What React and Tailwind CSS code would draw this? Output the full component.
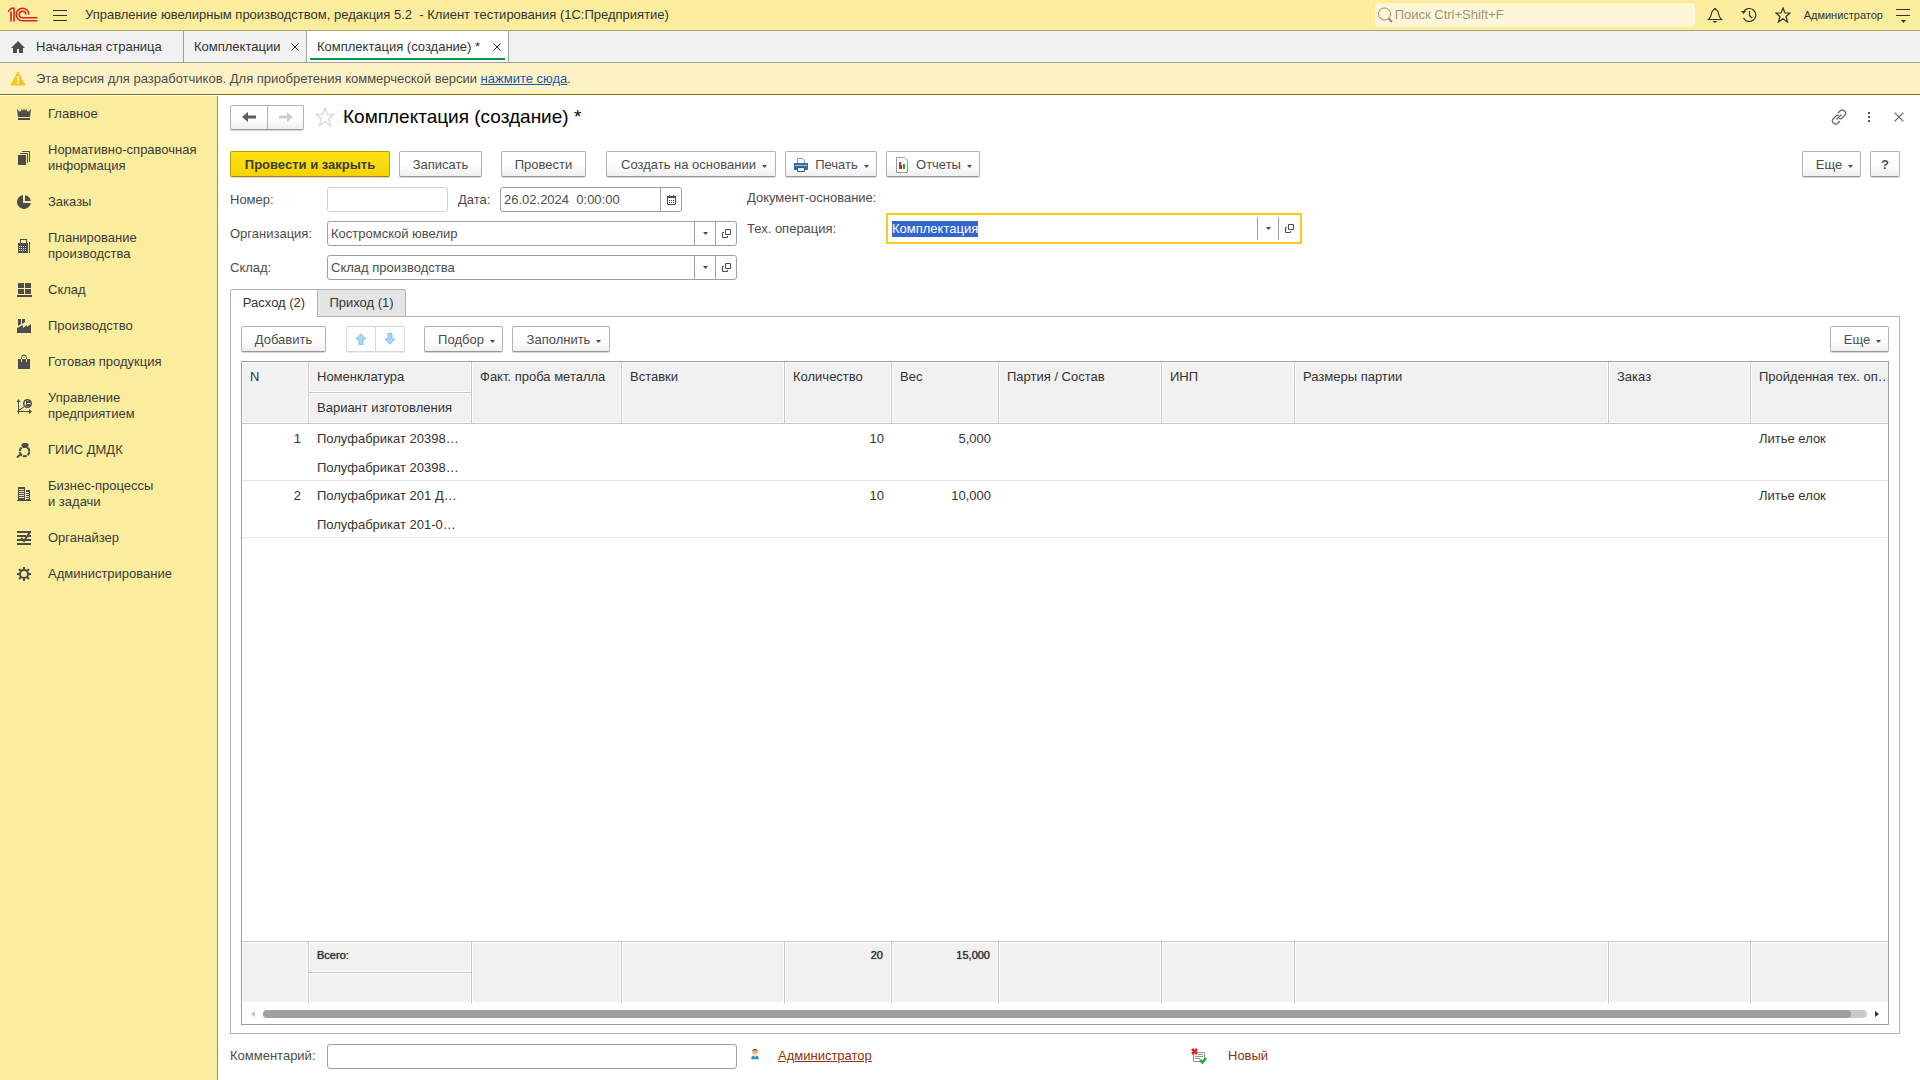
import { useEffect, useRef } from 'react';
import clsx from 'clsx';

const sections = [
  { icon: 'crown', label: 'Главное' },
  { icon: 'docs', label: 'Нормативно-справочная\nинформация' },
  { icon: 'pie', label: 'Заказы' },
  { icon: 'register', label: 'Планирование\nпроизводства' },
  { icon: 'boxes', label: 'Склад' },
  { icon: 'factory', label: 'Производство' },
  { icon: 'bag', label: 'Готовая продукция' },
  { icon: 'chart', label: 'Управление\nпредприятием' },
  { icon: 'ring', label: 'ГИИС ДМДК' },
  { icon: 'building', label: 'Бизнес-процессы\nи задачи' },
  { icon: 'organizer', label: 'Органайзер' },
  { icon: 'gear', label: 'Администрирование' },
];

const rows = [
  { n: 1, item: 'Полуфабрикат 20398…', variant: 'Полуфабрикат 20398…', qty: '10', weight: '5,000', operation: 'Литье елок' },
  { n: 2, item: 'Полуфабрикат 201 Д…', variant: 'Полуфабрикат 201-0…', qty: '10', weight: '10,000', operation: 'Литье елок' },
];

const sectionShapes = {
  crown: (
    <>
      <path d="M1 3l3 3 2-3 1 2 1-3 1 3 1-2 2 3 3-3-1 8H2z" />
      <path d="M2 12h12v2H2z" />
    </>
  ),
  docs: (
    <>
      <path d="M2 5h8v10H2z" />
      <path d="M4 3.500h7.500V13M6 1.500h7.500V12" fill="none" stroke="currentColor" />
    </>
  ),
  pie: (
    <>
      <path d="M7 1v8h7.900A7 7 0 1 1 7 1z" />
      <path d="M9 1.200A7 7 0 0 1 14.800 7H9z" />
    </>
  ),
  register: (
    <>
      <path d="M4 1h7v4h1v10H2V5h2zM5 2v3h5V2z" fillRule="evenodd" />
      <path d="M13 4h1v11h-1z" />
      <path d="M3 8.500h8M3 10.500h8M3 12.500h8" stroke="#fbed9e" strokeDasharray="1 1" />
    </>
  ),
  boxes: <path d="M2 1h6v5H2zM9 1h6v5H9zM2 7h6v5H2zM9 7h6v5H9zM1 13h15v2H1z" />,
  factory: (
    <>
      <path d="M1 10l6-3v3l4-3v2l4-3v9H1z" />
      <path d="M2 1h3v5L2 8zM6 1h3v3L6 6z" />
    </>
  ),
  bag: (
    <>
      <path d="M2 5h12v10H2z" />
      <path d="M5.500 8V5M10.500 8V5" fill="none" stroke="#fbed9e" />
      <path d="M5.500 5V3.500a2.500 2.500 0 0 1 5 0V5" fill="none" stroke="currentColor" />
    </>
  ),
  chart: (
    <>
      <path d="M2.500 1L.5 4h4zM16 13.500l-3-2.500v5z" />
      <path d="M2.500 3v13M1 13.500h13M3 12l5-3 1-2" fill="none" stroke="currentColor" />
      <circle cx="11.500" cy="5.500" r="3.800" fill="none" stroke="currentColor" strokeWidth="1.500" />
      <path d="M10 3h1v5h-1zM11 3h3v2h-3zM11 6h3v2h-3z" />
    </>
  ),
  ring: (
    <>
      <circle cx="8.500" cy="9.500" r="4.800" fill="none" stroke="currentColor" strokeWidth="2" strokeDasharray="4 1" />
      <path d="M7 1h4l2 2-2 3H7L5 3z" />
      <path d="M5 12l-4 3.500" stroke="currentColor" strokeWidth="2" />
    </>
  ),
  building: (
    <>
      <path d="M2 1h7v14H2zM10 4h4v11h-4zM1 14h14v1H1z" />
      <path d="M3 3.500h5M3 5.500h5M3 7.500h5M3 9.500h5M3 11.500h5M10 6.500h3M10 8.500h3M10 10.500h3M10 12.500h3" stroke="#fbed9e" />
    </>
  ),
  organizer: (
    <>
      <path d="M1 1h14v2H1zM1 5h9v2H1zM12 5h3v2h-3zM1 9h14v2H1zM1 13h14v2H1z" />
      <path d="M14 2L8 11 5 8" fill="none" stroke="currentColor" strokeWidth="2" />
    </>
  ),
  gear: (
    <>
      <circle cx="8" cy="8" r="4" fill="none" stroke="currentColor" strokeWidth="2" />
      <path
        d="M8 1v3M8 12v3M1 8h3M12 8h3M3 3l2 2M11 11l2 2M13 3l-2 2M5 11l-2 2"
        stroke="currentColor"
        strokeWidth="2"
      />
    </>
  ),
};

function SectionIcon({ name }) {
  return (
    <svg viewBox="0 0 16 16" className="size-4 shrink-0" fill="currentColor" aria-hidden="true">
      {sectionShapes[name]}
    </svg>
  );
}

function Caret({ className }) {
  return (
    <svg viewBox="0 0 5 3" className={clsx('h-[3px] w-[5px] shrink-0', className)} aria-hidden="true">
      <path d="M0 0h5L2.500 3z" fill="currentColor" />
    </svg>
  );
}

function Star({ className }) {
  return (
    <svg viewBox="0 0 16 16" className={className} fill="none" stroke="currentColor" strokeWidth="1.200" aria-hidden="true">
      <path d="M8 1l2 5h5l-4 3.500 1.500 5.500L8 11.800 3.500 15 5 9.500 1 6h5z" />
    </svg>
  );
}

function CrossMark({ className }) {
  return (
    <svg viewBox="0 0 8 8" className={className} fill="none" stroke="currentColor" aria-hidden="true">
      <path d="M.5.5l7 7M7.500.5l-7 7" />
    </svg>
  );
}

function LongArrow({ className }) {
  return (
    <svg viewBox="0 0 14 10" className={clsx('h-[10px] w-[14px]', className)} fill="currentColor" aria-hidden="true">
      <path d="M0 5l6-5v3.500h8v3H6V10z" />
    </svg>
  );
}

function Logo() {
  return (
    <svg viewBox="0 0 30 16" className="h-4 w-[30px]" fill="none" stroke="#dd201f" strokeWidth="1.600" aria-label="1С">
      <path d="M0 4.500L3.500 1.200H6V14.500M3 4.500V14.500" />
      <path d="M20.800 7.500A6.300 6.300 0 1 0 14.500 13.800H29.500" />
      <path d="M17.800 7.500A3.300 3.300 0 1 0 14.500 10.800H29.500" />
    </svg>
  );
}

function HeaderBar() {
  return (
    <header className="flex h-[31px] shrink-0 items-center border-b border-[#aca66c] bg-[#fbed9e] pl-2 pr-[10px]">
      <Logo />
      <button aria-label="Меню" className="ml-[15px] flex w-[14px] flex-col gap-1">
        <span className="h-px w-full bg-[#333]" />
        <span className="h-px w-full bg-[#333]" />
        <span className="h-px w-full bg-[#333]" />
      </button>
      <span className="ml-[18px] whitespace-pre">
        Управление ювелирным производством, редакция 5.2  - Клиент тестирования (1С:Предприятие)
      </span>
      <label className="ml-auto flex h-6 w-80 items-center rounded-sm bg-[#fdf6d7] pl-[2px] text-[#8e8a72]">
        <svg viewBox="0 0 16 16" className="size-4" fill="none" stroke="currentColor" aria-hidden="true">
          <circle cx="7.500" cy="7" r="6" />
          <path d="M11.500 11.500l3.500 3.500" strokeWidth="2" />
        </svg>
        <input
          type="search"
          aria-label="Поиск"
          placeholder="Поиск Ctrl+Shift+F"
          className="ml-[2px] flex-1 bg-transparent outline-none placeholder:text-[#9b967e]"
        />
      </label>
      <button aria-label="Оповещения" className="ml-3">
        <svg viewBox="0 0 16 16" className="size-4" fill="none" stroke="#333" strokeWidth="1.200">
          <path d="M1.500 12.500c2-2 2.500-3 3-6C5 3.500 6 2.500 8 2.500s3 1 3.500 4c.5 3 1 4 3 6zM7 1.500h2" />
          <path d="M5.500 14h5L8 16z" fill="#333" stroke="none" />
        </svg>
      </button>
      <button aria-label="История" className="ml-[18px]">
        <svg viewBox="0 0 16 16" className="size-4" fill="none" stroke="#333" strokeWidth="1.200">
          <path d="M2.500 5A6.500 6.500 0 1 1 2.500 11M8.500 4v4.500l2.500 2.500" />
          <path d="M0 4h5L2.500 7z" fill="#333" stroke="none" />
        </svg>
      </button>
      <button aria-label="Избранное" className="ml-[18px]">
        <Star className="size-4 text-[#333]" />
      </button>
      <button className="ml-[13px] text-[11px]">Администратор</button>
      <button aria-label="Настройки" className="ml-[13px] flex w-[14px] flex-col items-center pt-[2px]">
        <span className="h-px w-full bg-[#333]" />
        <span className="mt-[5px] h-px w-full bg-[#333]" />
        <Caret className="mt-1" />
      </button>
    </header>
  );
}

function WindowTabs() {
  return (
    <nav className="flex h-8 shrink-0 border-b border-[#9f9f9b] bg-[#f1f1f1]">
      <button className="flex w-[184px] items-center border-r border-[#a0a0a0] pl-[10px]">
        <svg viewBox="0 0 16 14" className="h-[14px] w-4" fill="#4c4c4c" aria-hidden="true">
          <path d="M8 1L1 8h2v5h4V9h2v4h4V8h2z" />
        </svg>
        <span className="ml-[10px]">Начальная страница</span>
      </button>
      <div className="flex w-[123px] items-center justify-between border-r border-[#a0a0a0] pl-[10px] pr-[7px]">
        <button>Комплектации</button>
        <button aria-label="Закрыть Комплектации">
          <CrossMark className="size-2" />
        </button>
      </div>
      <div className="flex w-[202px] flex-col border-r border-[#a0a0a0] bg-white px-[3px] pb-[2px]">
        <div className="flex flex-1 items-center justify-between border-b-2 border-[#00964b] pl-[7px] pr-1 pt-1">
          <button>Комплектация (создание) *</button>
          <button aria-label="Закрыть Комплектация">
            <CrossMark className="size-2" />
          </button>
        </div>
      </div>
    </nav>
  );
}

function Notice() {
  return (
    <div className="flex h-8 shrink-0 items-center border-b border-[#94780f] bg-[#fdf2c6] pl-[10px] text-[#4c4c4c]">
      <svg viewBox="0 0 16 15" className="h-[15px] w-4" aria-hidden="true">
        <path d="M8 1l7 13H1z" fill="#fcc51b" stroke="#fcc51b" strokeLinejoin="round" />
        <path d="M8 5v5M8 11v2" stroke="#fff" strokeWidth="1.600" />
      </svg>
      <p className="ml-[10px]">
        Эта версия для разработчиков. Для приобретения коммерческой версии{' '}
        <a href="#buy" className="text-[#1c55ae] underline">нажмите сюда</a>.
      </p>
    </div>
  );
}

function Sidebar() {
  return (
    <nav className="w-[218px] shrink-0 border-r border-[#97905f] bg-[#fbed9e]">
      {sections.map((section) => (
        <button
          key={section.label}
          className="flex w-full items-center py-[10px] pl-4 text-left leading-4 text-[#4c4c4c]"
        >
          <SectionIcon name={section.icon} />
          <span className="ml-4 whitespace-pre-line text-[#3a3a3a]">{section.label}</span>
        </button>
      ))}
    </nav>
  );
}

function Button({ className, primary, caret, children, ...props }) {
  return (
    <button
      className={clsx(
        'flex h-[26px] shrink-0 items-center justify-center rounded-[2px] border bg-linear-to-b pt-px shadow-[0_1px_0_#d8d8d8]',
        primary
          ? 'border-[#b89f00] border-b-[#9a8500] from-[#ffe314] to-[#f5d300] font-bold text-[#3c3c3c]'
          : 'border-[#b2b2b2] border-b-[#989898] from-white from-50% to-[#f0f0f0]',
        className,
      )}
      {...props}
    >
      {children}
      {caret && <Caret className="ml-[6px] mt-1" />}
    </button>
  );
}

function OpenIcon() {
  return (
    <svg viewBox="0 0 9 9" className="size-[9px]" fill="none" stroke="currentColor" aria-hidden="true">
      <path d="M3.500.5h5v5h-5zM2 3.500H.5v5h5V7" />
    </svg>
  );
}

function ComboField({ id, value }) {
  return (
    <div className="flex h-[25px] w-[410px] rounded-[3px] border border-[#9f9f9f] bg-white">
      <input id={id} defaultValue={value} className="min-w-0 flex-1 px-[3px] outline-none" />
      <button aria-label="Выбрать" className="flex w-[21px] items-center justify-center border-l border-[#9f9f9f]">
        <Caret />
      </button>
      <button aria-label="Открыть" className="flex w-[21px] items-center justify-center border-l border-[#9f9f9f]">
        <OpenIcon />
      </button>
    </div>
  );
}

function FormTitle() {
  return (
    <div className="-mr-1 flex h-[42px] items-center">
      <div className="flex h-[25px] rounded-[2px] border border-[#b2b2b2] border-b-[#989898] bg-linear-to-b from-white from-50% to-[#f0f0f0] shadow-[0_1px_0_#d8d8d8]">
        <button aria-label="Назад" className="flex w-[37px] items-center justify-center border-r border-[#b2b2b2] text-[#5c5c5c]">
          <LongArrow />
        </button>
        <button aria-label="Вперед" className="flex w-[35px] items-center justify-center text-[#cdcdcd]">
          <LongArrow className="rotate-180" />
        </button>
      </div>
      <button aria-label="Добавить в избранное" className="ml-[11px]">
        <Star className="size-5 text-[#dcdcdc]" />
      </button>
      <h1 className="ml-2 text-[19px] text-black">Комплектация (создание) *</h1>
      <button aria-label="Получить ссылку" className="ml-auto">
        <svg viewBox="0 0 16 16" className="size-4" fill="none" stroke="#666" strokeWidth="1.200">
          <path d="M5.500 10.500l5-5M7 4l2-2c3-3 7.500 1.500 5 4l-3 3c-1 1-2 1-3 .5M9 12l-2 2c-3 3-7.500-1.500-5-4l3-3c1-1 2-1 3-.5" />
        </svg>
      </button>
      <button aria-label="Дополнительно" className="ml-[21px] flex w-[2px] flex-col gap-[2px]">
        <span className="h-[2px] bg-[#555]" />
        <span className="h-[2px] bg-[#555]" />
        <span className="h-[2px] bg-[#555]" />
      </button>
      <button aria-label="Закрыть" className="ml-6 text-[#666]">
        <CrossMark className="size-[10px]" />
      </button>
    </div>
  );
}

function CommandBar() {
  return (
    <div className="flex pt-[13px]">
      <Button primary className="w-40">Провести и закрыть</Button>
      <Button className="ml-[9px] w-[83px]">Записать</Button>
      <Button className="ml-[19px] w-[85px]">Провести</Button>
      <Button caret className="ml-5 w-[170px] pl-[6px]">Создать на основании</Button>
      <Button caret className="ml-[9px] w-[92px]">
        <svg viewBox="0 0 16 16" className="mr-[6px] size-4" aria-hidden="true">
          <path d="M4.500 8V1.500h5l2 2V8" fill="#fff" stroke="#7d93ab" />
          <path d="M1 6h14v7H1z" fill="#3d6c9c" />
          <path d="M2 8.500h12" stroke="#9fc0df" />
          <path d="M4.500 10.500h7v4h-7z" fill="#e9f0f7" stroke="#2c5580" />
        </svg>
        Печать
      </Button>
      <Button caret className="ml-[9px] w-[94px]">
        <svg viewBox="0 0 16 16" className="mr-[6px] size-4" aria-hidden="true">
          <path d="M2.500.5h8l3 3v12h-11z" fill="#fff" stroke="#8c9aab" />
          <path d="M5 5h2v7H5z" fill="#e02b20" />
          <path d="M7 8h1v4H7z" fill="#b01a14" />
          <path d="M9 7h2v5H9z" fill="#2b9b35" />
        </svg>
        Отчеты
      </Button>
      <Button caret className="ml-auto w-[59px] pl-[6px]">Еще</Button>
      <Button className="ml-[9px] w-[30px] font-bold" aria-label="Справка">?</Button>
    </div>
  );
}

function DocumentFields() {
  const operationRef = useRef(null);

  useEffect(() => {
    operationRef.current?.focus();
    operationRef.current?.select();
  }, []);

  return (
    <div className="flex items-start pt-[10px]">
      <div className="grid w-[507px] grid-cols-[97px_1fr] items-center gap-y-[9px]">
        <label htmlFor="number">Номер:</label>
        <div className="flex items-center">
          <input id="number" className="h-[25px] w-[121px] rounded-[3px] border border-[#cfcfcf] px-[3px] outline-none" />
          <label htmlFor="date" className="ml-[10px] w-[42px]">Дата:</label>
          <div className="flex h-[25px] w-[182px] rounded-[3px] border border-[#9f9f9f]">
            <input id="date" defaultValue="26.02.2024  0:00:00" className="min-w-0 flex-1 px-[3px] outline-none" />
            <button aria-label="Календарь" className="flex w-[21px] items-center justify-center border-l border-[#9f9f9f]">
              <svg viewBox="0 0 9 10" className="h-[10px] w-[9px]" aria-hidden="true">
                <path d="M.5 1.500h8v8h-8z" fill="none" stroke="currentColor" />
                <path d="M0 1h9v2H0zM2 0h1v2H2zM6 0h1v2H6z" fill="currentColor" />
                <path d="M2 5.500h5M2 7.500h5" stroke="currentColor" strokeDasharray="1 1" />
              </svg>
            </button>
          </div>
        </div>
        <label htmlFor="organization">Организация:</label>
        <ComboField id="organization" value="Костромской ювелир" />
        <label htmlFor="warehouse">Склад:</label>
        <ComboField id="warehouse" value="Склад производства" />
      </div>
      <div className="ml-[10px] grid grid-cols-[139px_416px] items-center">
        <span className="col-span-2 flex h-[26px] items-center pb-1">Документ-основание:</span>
        <label htmlFor="operation">Тех. операция:</label>
        <div className="flex h-[31px] border-2 border-[#fcc91d] bg-white py-[2px] pl-[2px]">
          <input
            id="operation"
            ref={operationRef}
            defaultValue="Комплектация"
            className="min-w-0 flex-1 px-[2px] outline-none selection:bg-[#3165cf] selection:text-white"
          />
          <button aria-label="Выбрать" className="flex w-[21px] items-center justify-center border-l border-[#9f9f9f]">
            <Caret />
          </button>
          <button aria-label="Открыть" className="flex w-[22px] items-center justify-center border-l border-[#9f9f9f]">
            <OpenIcon />
          </button>
        </div>
      </div>
    </div>
  );
}

function MoveArrow({ className }) {
  return (
    <svg viewBox="0 0 12 12" className={clsx('size-3', className)} fill="#a5d8f3" stroke="#86bfe0" aria-hidden="true">
      <path d="M6 .7L11 6H8v5.500H4V6H1z" />
    </svg>
  );
}

function HeadCell({ children, rowSpan = 2 }) {
  return (
    <th
      rowSpan={rowSpan}
      className="truncate border-r border-b border-[#c6c6c6] bg-[#f1f1f1] px-2 pt-[7px] text-left align-top font-normal leading-4 shadow-[inset_0_0_0_1px_#fff]"
    >
      {children}
    </th>
  );
}

function FootCell({ children, rowSpan = 2, className }) {
  return (
    <td
      rowSpan={rowSpan}
      className={clsx(
        'border-t border-r border-[#c6c6c6] bg-[#f1f1f1] px-2 pt-[5px] align-top text-[11px] leading-4 shadow-[inset_0_0_0_1px_#fff] text-shadow-[0_0_1px_#333]',
        className,
      )}
    >
      {children}
    </td>
  );
}

function ItemsTable() {
  return (
    <div className="min-h-0 flex-1 overflow-hidden">
      <table className="h-full w-[calc(100%+16px)] table-fixed border-separate border-spacing-0 text-[#333]">
        <colgroup>
          <col className="w-[67px]" />
          <col className="w-[163px]" />
          <col className="w-[150px]" />
          <col className="w-[163px]" />
          <col className="w-[107px]" />
          <col className="w-[107px]" />
          <col className="w-[163px]" />
          <col className="w-[133px]" />
          <col className="w-[314px]" />
          <col className="w-[142px]" />
          <col />
        </colgroup>
        <thead>
          <tr className="h-[31px]">
            <HeadCell>N</HeadCell>
            <HeadCell rowSpan={1}>Номенклатура</HeadCell>
            <HeadCell>Факт. проба металла</HeadCell>
            <HeadCell>Вставки</HeadCell>
            <HeadCell>Количество</HeadCell>
            <HeadCell>Вес</HeadCell>
            <HeadCell>Партия / Состав</HeadCell>
            <HeadCell>ИНП</HeadCell>
            <HeadCell>Размеры партии</HeadCell>
            <HeadCell>Заказ</HeadCell>
            <HeadCell>Пройденная тех. оп…</HeadCell>
          </tr>
          <tr className="h-[31px]">
            <HeadCell rowSpan={1}>Вариант изготовления</HeadCell>
          </tr>
        </thead>
        <tbody>
          {rows.map((row) => (
            <tr key={row.n} className="h-[57px] align-top leading-4 *:border-b *:border-[#e4e4e4] *:px-2 *:pt-[7px]">
              <td className="text-right">{row.n}</td>
              <td className="whitespace-nowrap">
                <div>{row.item}</div>
                <div className="mt-[13px]">{row.variant}</div>
              </td>
              <td />
              <td />
              <td className="text-right">{row.qty}</td>
              <td className="text-right">{row.weight}</td>
              <td />
              <td />
              <td />
              <td />
              <td>{row.operation}</td>
            </tr>
          ))}
          <tr>
            <td colSpan={11} />
          </tr>
        </tbody>
        <tfoot>
          <tr className="h-[31px]">
            <FootCell />
            <FootCell rowSpan={1}>Всего:</FootCell>
            <FootCell />
            <FootCell />
            <FootCell className="text-right">20</FootCell>
            <FootCell className="text-right">15,000</FootCell>
            <FootCell />
            <FootCell />
            <FootCell />
            <FootCell />
            <FootCell />
          </tr>
          <tr className="h-[31px]">
            <FootCell rowSpan={1} />
          </tr>
        </tfoot>
      </table>
    </div>
  );
}

function Scrollbar() {
  return (
    <div className="flex h-[21px] shrink-0 items-center px-[9px]">
      <svg viewBox="0 0 4 6" className="h-[6px] w-1" fill="#c4c4c4" aria-hidden="true">
        <path d="M4 0v6L0 3z" />
      </svg>
      <div className="mx-2 h-2 flex-1 rounded-full bg-[#cacaca]">
        <div className="h-2 w-[99%] rounded-full bg-[#9f9f9f]" />
      </div>
      <svg viewBox="0 0 4 6" className="h-[6px] w-1" fill="#333" aria-hidden="true">
        <path d="M0 0v6l4-3z" />
      </svg>
    </div>
  );
}

function ItemsPanel() {
  return (
    <>
      <div role="tablist" className="z-10 mt-[9px] -mb-px flex shrink-0 text-[#333]">
        <button role="tab" aria-selected="true" className="h-7 w-[87px] rounded-tl-[2px] border border-r-0 border-b-0 border-[#b2b2b2] bg-white pb-[2px]">
          Расход (2)
        </button>
        <button role="tab" aria-selected="false" className="h-7 w-[89px] rounded-tr-[2px] border border-[#b2b2b2] bg-[#e5e5e5]">
          Приход (1)
        </button>
      </div>
      <div className="flex min-h-0 flex-1 flex-col border border-[#b2b2b2] px-[10px] pt-[9px] pb-2">
        <div className="flex shrink-0">
          <Button className="w-[85px]">Добавить</Button>
          <div className="ml-5 flex h-[26px] w-[59px] rounded-[2px] border border-[#d6d6d6] shadow-[0_1px_0_#ececec]">
            <button aria-label="Переместить вверх" className="flex flex-1 items-center justify-center border-r border-[#d6d6d6]">
              <MoveArrow />
            </button>
            <button aria-label="Переместить вниз" className="flex flex-1 items-center justify-center">
              <MoveArrow className="rotate-180" />
            </button>
          </div>
          <Button caret className="ml-[19px] w-[79px] pl-[6px]">Подбор</Button>
          <Button caret className="ml-[9px] w-[98px] pl-[6px]">Заполнить</Button>
          <Button caret className="ml-auto w-[59px] pl-[6px]">Еще</Button>
        </div>
        <div className="mt-[9px] flex min-h-0 flex-1 flex-col border border-[#9f9f9f]">
          <ItemsTable />
          <Scrollbar />
        </div>
      </div>
    </>
  );
}

function FormFooter() {
  return (
    <div className="flex h-[46px] shrink-0 items-center pb-[2px]">
      <label htmlFor="comment" className="w-[97px]">Комментарий:</label>
      <input id="comment" className="h-[25px] w-[410px] rounded-[3px] border border-[#9f9f9f] px-[3px] outline-none" />
      <svg viewBox="0 0 12 16" className="ml-3 h-4 w-3 pb-1" aria-hidden="true">
        <path d="M1 15c0-4 1-5 5-5s5 1 5 5z" fill="#2f8fc4" />
        <circle cx="6" cy="5" r="3.500" fill="#f0b45c" />
        <path d="M2.500 5C2 0 10 0 9.500 5L8 3H4z" fill="#4a3a2a" />
        <path d="M4.500 9.500h3L6 13z" fill="#fff" />
      </svg>
      <a href="#author" className="ml-[17px] w-[413px] text-[#8f3208] underline">Администратор</a>
      <svg viewBox="0 0 16 16" className="size-4" aria-hidden="true">
        <path d="M2.500 4.500h11v9h-11z" fill="#fff" stroke="#8296ab" />
        <path d="M7 6.500h5M4 8.500h8M4 10.500h5" stroke="#8296ab" />
        <path d="M1 1l5 5M6 1L1 6" stroke="#d92525" strokeWidth="2.500" />
        <path d="M9 12l2.500 2.500L15 10" fill="none" stroke="#1fae3a" strokeWidth="2.500" />
      </svg>
      <span className="ml-[21px] text-[#8f3208]">Новый</span>
    </div>
  );
}

export default function App() {
  return (
    <div className="flex h-screen flex-col overflow-hidden bg-white font-['Liberation_Sans',Arial,sans-serif] text-[13px] leading-4 text-[#333]">
      <HeaderBar />
      <WindowTabs />
      <Notice />
      <div className="flex min-h-0 flex-1 pt-px">
        <Sidebar />
        <main className="flex min-w-0 flex-1 flex-col pl-3 pr-5 text-[#4c4c4c]">
          <FormTitle />
          <CommandBar />
          <DocumentFields />
          <ItemsPanel />
          <FormFooter />
        </main>
      </div>
    </div>
  );
}
